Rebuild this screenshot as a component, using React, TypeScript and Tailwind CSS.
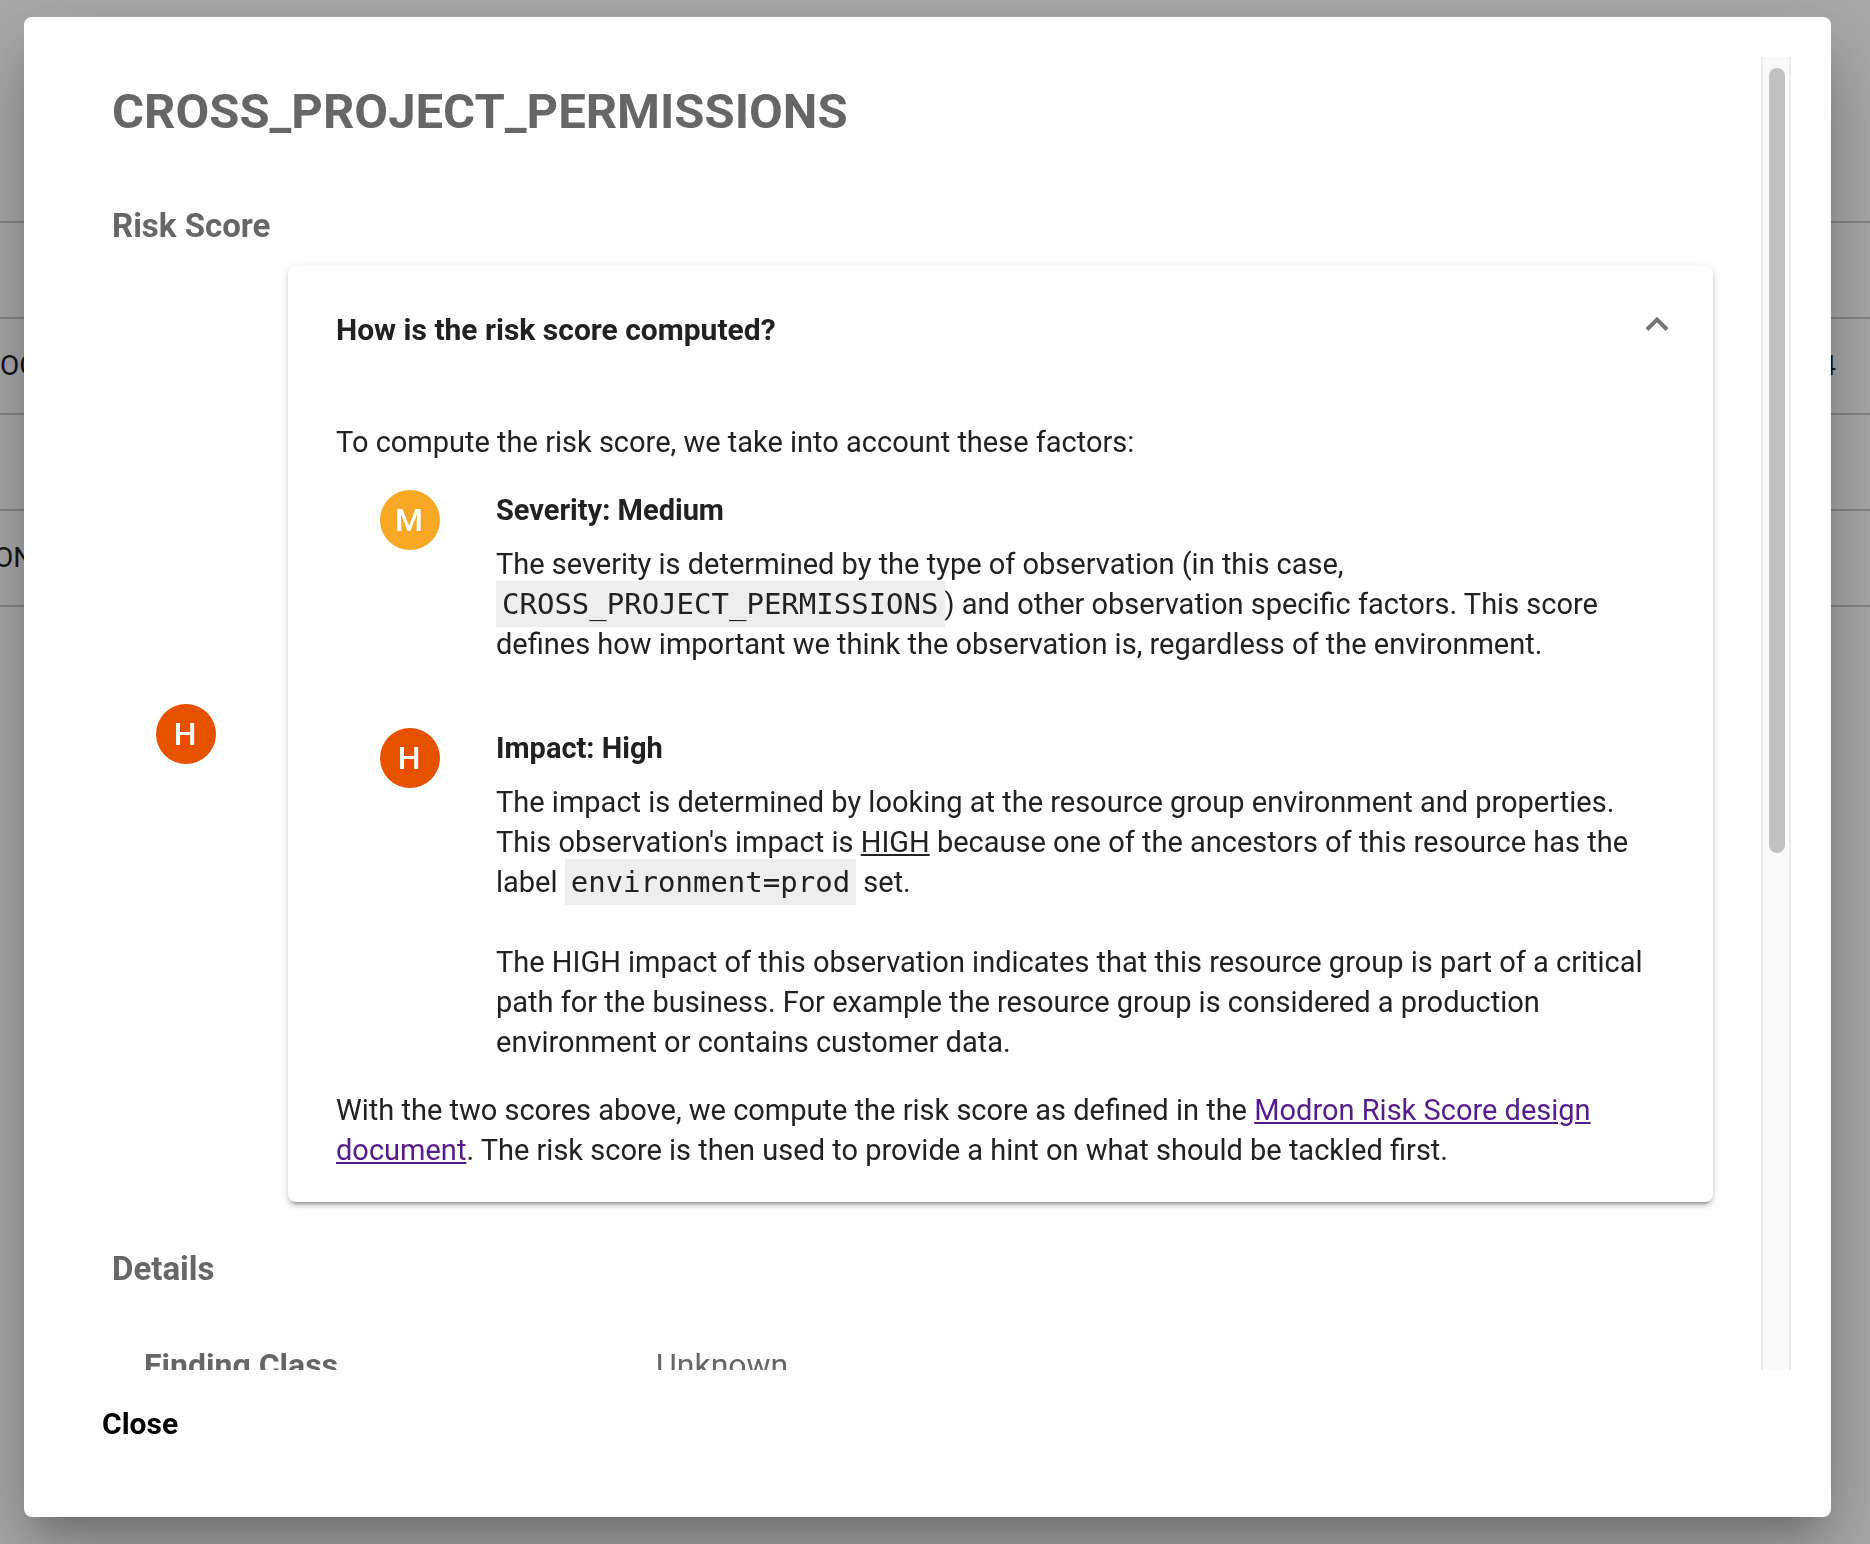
import React from "react";

type Level = "M" | "H";

function Badge({ level }: { level: Level }) {
  const color = level === "M" ? "bg-[#f9a825]" : "bg-[#e65100]";
  return (
    <span
      className={`flex size-[60px] shrink-0 items-center justify-center rounded-full pr-0.5 text-[32px] leading-none font-medium text-white ${color}`}
    >
      {level}
    </span>
  );
}

function Code({ children }: { children: React.ReactNode }) {
  return (
    <code className="bg-[#eeeeee] p-1.5 font-['DejaVu_Sans_Mono',monospace]">{children}</code>
  );
}

function Factor({
  level,
  title,
  children,
}: {
  level: Level;
  title: string;
  children: React.ReactNode;
}) {
  return (
    <li className="flex pl-11">
      <Badge level={level} />
      <div className="ml-14 flex-1">
        <h4 className="font-bold">{title}</h4>
        {children}
      </div>
    </li>
  );
}

const rows = ["", "", "OG", "", "ON"];

function BackgroundTable() {
  return (
    <table className="mt-[126px] w-full text-[28px] text-[#212121]">
      <tbody>
        {rows.map((name, i) => (
          <tr key={i} className="h-24 border-b-2 border-[#c6c6c6]">
            <td className={name === "ON" ? "-indent-1.5" : ""}>{name}</td>
            <td className="pr-[34px] text-right">{i === 2 ? "4" : ""}</td>
          </tr>
        ))}
      </tbody>
    </table>
  );
}

export default function App() {
  return (
    <div className="h-screen overflow-hidden bg-[#fafafa] font-[Roboto,sans-serif]">
      <BackgroundTable />
      <div className="fixed inset-0 flex bg-black/32 pt-[17px] pr-[39px] pb-[27px] pl-6">
        <div
          role="dialog"
          aria-labelledby="dialog-title"
          className="flex min-w-0 flex-1 flex-col rounded-lg bg-white p-10 shadow-[0_22px_30px_-14px_rgba(0,0,0,0.2),0_48px_76px_6px_rgba(0,0,0,0.14),0_18px_92px_16px_rgba(0,0,0,0.12)]"
        >
          <div className="flex min-h-0 flex-1">
            <div className="min-w-0 flex-1 overflow-hidden px-12 text-[#666666]">
              <h1 id="dialog-title" className="mt-[23px] text-[49px] leading-[64px] font-bold">
                CROSS_PROJECT_PERMISSIONS
              </h1>
              <h2 className="mt-[62px] text-[33px] leading-10 font-bold">Risk Score</h2>
              <div className="mt-5 flex items-center">
                <div className="flex w-44 shrink-0 pl-11">
                  <Badge level="H" />
                </div>
                <section className="flex-1 rounded-lg bg-white text-[29px] leading-10 text-[#212121] shadow-[0_6px_2px_-4px_rgba(0,0,0,0.2),0_4px_4px_0_rgba(0,0,0,0.14),0_2px_10px_0_rgba(0,0,0,0.12)]">
                  <h3>
                    <button
                      type="button"
                      aria-expanded="true"
                      className="flex h-32 w-full items-center justify-between pr-11 pl-12 text-left text-[30px] font-bold"
                    >
                      How is the risk score computed?
                      <svg
                        width="24"
                        height="16"
                        viewBox="0 0 24 16"
                        fill="none"
                        stroke="#757575"
                        strokeWidth="4"
                        className="mb-3"
                        aria-hidden="true"
                      >
                        <path d="M2 13.5 L12 3.5 L22 13.5" />
                      </svg>
                    </button>
                  </h3>
                  <div className="px-12 pt-7 pb-8">
                    <p>To compute the risk score, we take into account these factors:</p>
                    <ul className="my-7 flex flex-col gap-16">
                      <Factor level="M" title="Severity: Medium">
                        <p className="mt-3.5">
                          The severity is determined by the type of observation (in this case,
                          <br />
                          <Code>CROSS_PROJECT_PERMISSIONS</Code>) and other observation specific
                          factors. This score
                          <br />
                          defines how important we think the observation is, regardless of the
                          environment.
                        </p>
                      </Factor>
                      <Factor level="H" title="Impact: High">
                        <p className="mt-3.5">
                          The impact is determined by looking at the resource group environment and
                          properties.
                          <br />
                          This observation's impact is <u>HIGH</u> because one of the ancestors of
                          this resource has the
                          <br />
                          label <Code>environment=prod</Code> set.
                        </p>
                        <p className="mt-10">
                          The HIGH impact of this observation indicates that this resource group is
                          part of a critical
                          <br />
                          path for the business. For example the resource group is considered a
                          production
                          <br />
                          environment or contains customer data.
                        </p>
                      </Factor>
                    </ul>
                    <p>
                      With the two scores above, we compute the risk score as defined in the{" "}
                      <a href="#design" className="text-[#551a8b] underline">
                        Modron Risk Score design
                        <br />
                        document
                      </a>
                      . The risk score is then used to provide a hint on what should be tackled
                      first.
                    </p>
                  </div>
                </section>
              </div>
              <h2 className="mt-[47px] text-[33px] leading-10 font-bold">Details</h2>
              <dl className="mt-14 grid grid-cols-[512px_1fr] pl-8 text-[32px] leading-10">
                <dt className="font-bold">Finding Class</dt>
                <dd>Unknown</dd>
              </dl>
            </div>
            <div className="w-[30px] shrink-0 border-x-2 border-[#ebebeb] bg-[#fafafa] pt-[11px] pr-1 pl-1.5">
              <div className="h-[785px] rounded-full bg-[#c1c1c1]" />
            </div>
          </div>
          <div className="h-[107px] shrink-0 pt-[34px] pl-[38px]">
            <button type="button" className="text-[30px] leading-10 font-bold text-black">
              Close
            </button>
          </div>
        </div>
      </div>
    </div>
  );
}
